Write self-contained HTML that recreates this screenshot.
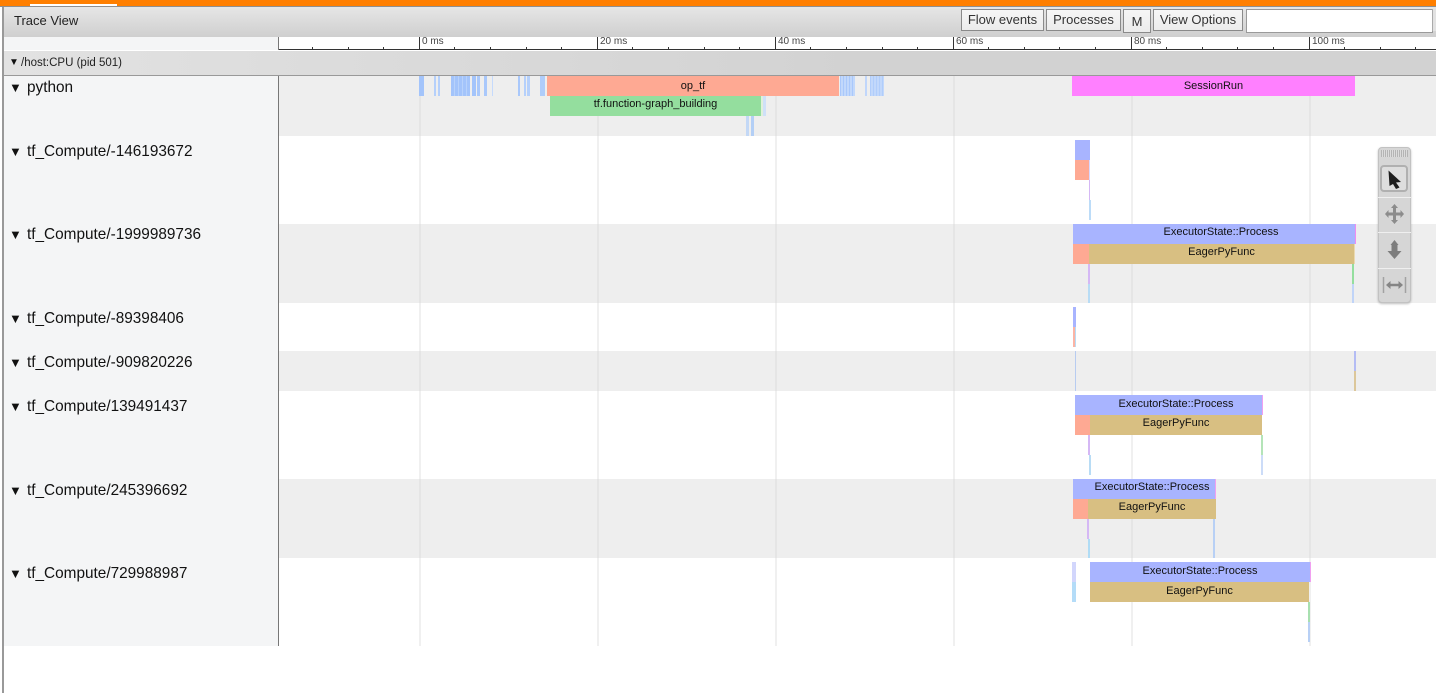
<!DOCTYPE html>
<html><head><meta charset="utf-8"><title>Trace View</title>
<style>
html,body{margin:0;padding:0;width:1436px;height:693px;overflow:hidden;background:#fff;font-family:"Liberation Sans",sans-serif;}
#r{position:absolute;left:0;top:0;width:1436px;height:693px;overflow:hidden;}
#r div{position:absolute;}
.b{top:76px;height:20px;}
.t{font-size:11px;line-height:20px;height:20px;text-align:center;color:#111;white-space:nowrap;overflow:hidden;}
.lab{left:27px;font-size:15.35px;line-height:18px;color:#111;white-space:nowrap;}
.arr{left:9px;font-size:13px;line-height:18px;color:#111;}
.btn{top:9px;height:20px;border:1px solid #8a8a8a;background:linear-gradient(#f6f6f6,#ececec);font-size:13px;line-height:20px;text-align:center;color:#333;box-sizing:content-box;}
.g{width:2px;top:76px;height:570px;background:#d8d8d8;opacity:.38;}
.rm{top:37px;width:1px;height:12px;background:#333;}
.rt{top:47px;width:1px;height:2px;background:#333;}
.rl{top:36px;font-size:10px;line-height:11px;color:#444;white-space:nowrap;}
</style></head><body><div id="r">
<div style="left:0;top:0;width:1436px;height:6px;background:#ff7f00"></div>
<div style="left:30px;top:4px;width:87px;height:2px;background:#fff"></div>
<div style="left:0;top:6px;width:1436px;height:1px;background:#8f8f8f"></div>
<div style="left:3px;top:7px;width:1433px;height:30px;background:linear-gradient(#e6e6e6,#cfcfcf)"></div>
<div style="left:14px;top:12px;font-size:13px;line-height:17px;color:#222">Trace View</div>
<div class="btn" style="left:961px;width:81px">Flow events</div>
<div class="btn" style="left:1046px;width:73px">Processes</div>
<div class="btn" style="left:1123px;width:26px;height:22px;line-height:23px">M</div>
<div class="btn" style="left:1153px;width:88px">View Options</div>
<div style="left:1246px;top:9px;width:185px;height:22px;border:1px solid #9a9a9a;background:#fff"></div>
<div style="left:1432px;top:9px;width:4px;height:22px;background:#e2e2e2;border-left:1px solid #aaa"></div>

<div style="left:4px;top:37px;width:275px;height:13px;background:#f4f5f6"></div>
<div style="left:279px;top:37px;width:1157px;height:13px;background:#fff"></div>
<div style="left:279px;top:49px;width:1157px;height:1px;background:#333"></div>
<div style="left:278px;top:37px;width:1px;height:13px;background:#777"></div>
<div class="rm" style="left:419px"></div><div class="rm" style="left:597px"></div><div class="rm" style="left:775px"></div><div class="rm" style="left:953px"></div><div class="rm" style="left:1131px"></div><div class="rm" style="left:1309px"></div>
<div class="rt" style="left:312px"></div><div class="rt" style="left:348px"></div><div class="rt" style="left:383px"></div>
<div class="rt" style="left:454px"></div><div class="rt" style="left:490px"></div><div class="rt" style="left:526px"></div><div class="rt" style="left:561px"></div>
<div class="rt" style="left:632px"></div><div class="rt" style="left:668px"></div><div class="rt" style="left:704px"></div><div class="rt" style="left:739px"></div>
<div class="rt" style="left:810px"></div><div class="rt" style="left:846px"></div><div class="rt" style="left:882px"></div><div class="rt" style="left:917px"></div>
<div class="rt" style="left:988px"></div><div class="rt" style="left:1024px"></div><div class="rt" style="left:1059px"></div><div class="rt" style="left:1095px"></div>
<div class="rt" style="left:1166px"></div><div class="rt" style="left:1202px"></div><div class="rt" style="left:1237px"></div><div class="rt" style="left:1273px"></div>
<div class="rt" style="left:1344px"></div><div class="rt" style="left:1380px"></div><div class="rt" style="left:1415px"></div>
<div class="rl" style="left:422px">0 ms</div><div class="rl" style="left:600px">20 ms</div><div class="rl" style="left:778px">40 ms</div><div class="rl" style="left:956px">60 ms</div><div class="rl" style="left:1134px">80 ms</div><div class="rl" style="left:1312px">100 ms</div>

<div style="left:4px;top:51px;width:1432px;height:24px;background:linear-gradient(90deg,#e2e2e2,#d2d2d2 60%)"></div>
<div style="left:4px;top:75px;width:1432px;height:1px;background:#999"></div>
<div style="left:9px;top:55px;font-size:10px;line-height:16px;color:#111">▼</div>
<div style="left:21px;top:55px;font-size:11.500px;line-height:16px;color:#222">/host:CPU (pid 501)</div>

<div style="left:279px;top:76px;width:1157px;height:60px;background:#eee"></div>
<div style="left:279px;top:224px;width:1157px;height:79px;background:#eee"></div>
<div style="left:279px;top:351px;width:1157px;height:40px;background:#eee"></div>
<div style="left:279px;top:479px;width:1157px;height:79px;background:#eee"></div>

<div style="left:4px;top:76px;width:274px;height:570px;background:#f4f5f6"></div>
<div style="left:278px;top:76px;width:1px;height:570px;background:#777"></div>
<div style="left:2px;top:7px;width:2px;height:686px;background:#999"></div>

<div class="g" style="left:419px"></div><div class="g" style="left:597px"></div><div class="g" style="left:775px"></div><div class="g" style="left:953px"></div><div class="g" style="left:1131px"></div><div class="g" style="left:1309px"></div>

<div class="arr" style="top:79px">▼</div><div class="lab" style="top:79px">python</div>
<div class="arr" style="top:143px">▼</div><div class="lab" style="top:143px">tf_Compute/-146193672</div>
<div class="arr" style="top:226px">▼</div><div class="lab" style="top:226px">tf_Compute/-1999989736</div>
<div class="arr" style="top:310px">▼</div><div class="lab" style="top:310px">tf_Compute/-89398406</div>
<div class="arr" style="top:354px">▼</div><div class="lab" style="top:354px">tf_Compute/-909820226</div>
<div class="arr" style="top:398px">▼</div><div class="lab" style="top:398px">tf_Compute/139491437</div>
<div class="arr" style="top:482px">▼</div><div class="lab" style="top:482px">tf_Compute/245396692</div>
<div class="arr" style="top:565px">▼</div><div class="lab" style="top:565px">tf_Compute/729988987</div>

<!-- python slices -->
<div class="b" style="left:419px;width:5px;background:#a3c4fb"></div>
<div class="b" style="left:434px;width:2px;background:#b5d0fb"></div>
<div class="b" style="left:438px;width:2px;background:#b5d0fb"></div>
<div class="b" style="left:451px;width:19px;background:repeating-linear-gradient(90deg,#a3c4fb 0 3px,#b8d2fb 3px 4px)"></div>
<div class="b" style="left:472px;width:4px;background:#a3c4fb"></div>
<div class="b" style="left:477px;width:3px;background:#a9c8fb"></div>
<div class="b" style="left:484px;width:3px;background:#a9c8fb"></div>
<div class="b" style="left:492px;width:1px;background:#c5dafc"></div>
<div class="b" style="left:518px;width:2px;background:#a9c8fb"></div>
<div class="b" style="left:524px;width:2px;background:#b5d0fb"></div>
<div class="b" style="left:527px;width:3px;background:#b5d0fb"></div>
<div class="b" style="left:540px;width:5px;background:#afcdfb"></div>
<div class="b t" style="left:547px;width:292px;background:#fea993">op_tf</div>
<div class="b" style="left:840px;width:15px;background:repeating-linear-gradient(90deg,#a9c8fb 0 1px,#c2d8fb 1px 3px)"></div>
<div class="b" style="left:865px;width:2px;background:#c0d6fb"></div>
<div class="b" style="left:870px;width:14px;background:repeating-linear-gradient(90deg,#b0cdfb 0 1px,#c2d8fb 1px 3px)"></div>
<div class="b t" style="top:96px;left:550px;width:211px;background:#94de9e;line-height:16px">tf.function-graph_building</div>
<div class="b" style="top:96px;left:761px;width:2px;background:#dff0dc"></div>
<div class="b" style="top:96px;left:763px;width:3px;background:#cfe0f8"></div>
<div style="top:116px;left:746px;width:3px;height:20px;background:#c3d8f6"></div>
<div style="top:116px;left:751px;width:3px;height:20px;background:#b3cff6"></div>
<div class="b t" style="left:1072px;width:283px;background:#ff80ff">SessionRun</div>

<!-- -146193672 -->
<div style="left:1075px;top:140px;width:15px;height:20px;background:#a8b4ff"></div>
<div style="left:1075px;top:160px;width:14px;height:20px;background:#fea993"></div>
<div style="left:1089px;top:160px;width:1px;height:20px;background:#d8d8ff"></div>
<div style="left:1089px;top:180px;width:1px;height:20px;background:#d5b8f5"></div>
<div style="left:1089px;top:200px;width:2px;height:20px;background:#bcdcf8"></div>

<!-- -1999989736 -->
<div style="left:1073px;top:224px;width:282px;height:20px;background:#a8b4ff"></div>
<div class="t" style="left:1073px;top:222px;width:296px">ExecutorState::Process</div>
<div style="left:1355px;top:224px;width:1px;height:20px;background:#f08cf0"></div>
<div style="left:1073px;top:244px;width:16px;height:20px;background:#fea993"></div>
<div class="t" style="left:1089px;top:244px;width:265px;background:#d8bf82;line-height:16px">EagerPyFunc</div>
<div style="left:1354px;top:244px;width:1px;height:20px;background:#ead9b0"></div>
<div style="left:1088px;top:264px;width:2px;height:20px;background:#d5b8f5"></div>
<div style="left:1088px;top:284px;width:2px;height:19px;background:#b8dcf5"></div>
<div style="left:1352px;top:264px;width:2px;height:20px;background:#94de9e"></div>
<div style="left:1352px;top:284px;width:2px;height:19px;background:#c0d4f8"></div>

<!-- -89398406 -->
<div style="left:1073px;top:307px;width:3px;height:20px;background:#a8b4ff"></div>
<div style="left:1073px;top:327px;width:2px;height:20px;background:#fbb4a5"></div>
<div style="left:1075px;top:327px;width:1px;height:20px;background:#b8dcf5"></div>

<!-- -909820226 -->
<div style="left:1075px;top:351px;width:1px;height:40px;background:#b8ccf0"></div>
<div style="left:1354px;top:351px;width:2px;height:20px;background:#b4bcf4"></div>
<div style="left:1354px;top:371px;width:2px;height:20px;background:#dcc79a"></div>

<!-- 139491437 -->
<div style="left:1075px;top:395px;width:187px;height:20px;background:#a8b4ff"></div>
<div class="t" style="left:1090px;top:395px;width:172px;line-height:18px">ExecutorState::Process</div>
<div style="left:1262px;top:395px;width:1px;height:20px;background:#f0a0f0"></div>
<div style="left:1075px;top:415px;width:15px;height:20px;background:#fea993"></div>
<div class="t" style="left:1090px;top:415px;width:172px;background:#d8bf82;line-height:16px">EagerPyFunc</div>
<div style="left:1088px;top:435px;width:2px;height:20px;background:#d5b8f5"></div>
<div style="left:1089px;top:455px;width:2px;height:20px;background:#b8dcf5"></div>
<div style="left:1261px;top:435px;width:2px;height:20px;background:#b4e4b8"></div>
<div style="left:1261px;top:455px;width:2px;height:20px;background:#ccdcf8"></div>

<!-- 245396692 -->
<div style="left:1073px;top:479px;width:142px;height:20px;background:#a8b4ff"></div>
<div class="t" style="left:1088px;top:479px;width:128px;line-height:17px">ExecutorState::Process</div>
<div style="left:1215px;top:479px;width:1px;height:20px;background:#f0a0f0"></div>
<div style="left:1073px;top:499px;width:15px;height:20px;background:#fea993"></div>
<div class="t" style="left:1088px;top:499px;width:128px;background:#d8bf82;line-height:17px">EagerPyFunc</div>
<div style="left:1087px;top:519px;width:2px;height:20px;background:#d5b8f5"></div>
<div style="left:1088px;top:539px;width:2px;height:19px;background:#b0dcf5"></div>
<div style="left:1213px;top:519px;width:2px;height:39px;background:#b8d0f5"></div>

<!-- 729988987 -->
<div style="left:1072px;top:562px;width:4px;height:20px;background:#d2d6fc"></div>
<div style="left:1072px;top:582px;width:4px;height:20px;background:#b4dcf8"></div>
<div class="t" style="left:1090px;top:562px;width:220px;background:#a8b4ff;line-height:18px">ExecutorState::Process</div>
<div style="left:1310px;top:562px;width:1px;height:20px;background:#f0a0f0"></div>
<div class="t" style="left:1090px;top:582px;width:219px;background:#d8bf82;line-height:18px">EagerPyFunc</div>
<div style="left:1308px;top:602px;width:2px;height:20px;background:#a8e0b0"></div>
<div style="left:1308px;top:622px;width:2px;height:20px;background:#b8d0f5"></div>

<!-- mouse mode selector -->
<div style="left:1378px;top:147px;width:33px;height:156px;box-sizing:border-box;border:1px solid #c2c2c2;border-radius:4px;background:#d6d6d6;box-shadow:0 1px 2px rgba(0,0,0,.25)"></div>
<div style="left:1381px;top:150px;width:27px;height:7px;background:repeating-linear-gradient(90deg,#b4b4b4 0 1px,#dcdcdc 1px 2px)"></div>
<div style="left:1378px;top:197px;width:33px;height:1px;background:#efefef"></div>
<div style="left:1378px;top:232px;width:33px;height:1px;background:#efefef"></div>
<div style="left:1378px;top:268px;width:33px;height:1px;background:#efefef"></div>
<div style="left:1380px;top:165px;width:28px;height:27px;box-sizing:border-box;border:2px solid #b0b0b0;border-radius:4px;background:#dedede"></div>
<svg style="position:absolute;left:1378px;top:147px" width="33" height="156" viewBox="0 0 33 156">
<path d="M10.500 23.500 L23 35 L18 35.500 L21.500 40.500 L18 42 L15 37 L11.500 39 Z" fill="#1e1e1e"/>
<path d="M16.500 57 L20 61 L18 61 L18 65.500 L22.500 65.500 L22.500 63 L26 67 L22.500 71 L22.500 68.500 L18 68.500 L18 73 L20 73 L16.500 77 L13 73 L15 73 L15 68.500 L10.500 68.500 L10.500 71 L7 67 L10.500 63 L10.500 65.500 L15 65.500 L15 61 L13 61 Z" fill="#8c8c8c"/>
<path d="M16.500 93 L20.500 98 L19.500 98 L19.500 104 L23.500 104 L16.500 112 L9.500 104 L13.500 104 L13.500 98 L12.500 98 Z" fill="#7d7d7d"/>
<path d="M5.500 130 V146 M27.500 130 V146" stroke="#a2a2a2" stroke-width="1.500"/>
<path d="M8 138 L12.500 134 V136.700 H20.500 V134 L25 138 L20.500 142 V139.300 H12.500 V142 Z" fill="#858585"/>
</svg>
</div></body></html>
